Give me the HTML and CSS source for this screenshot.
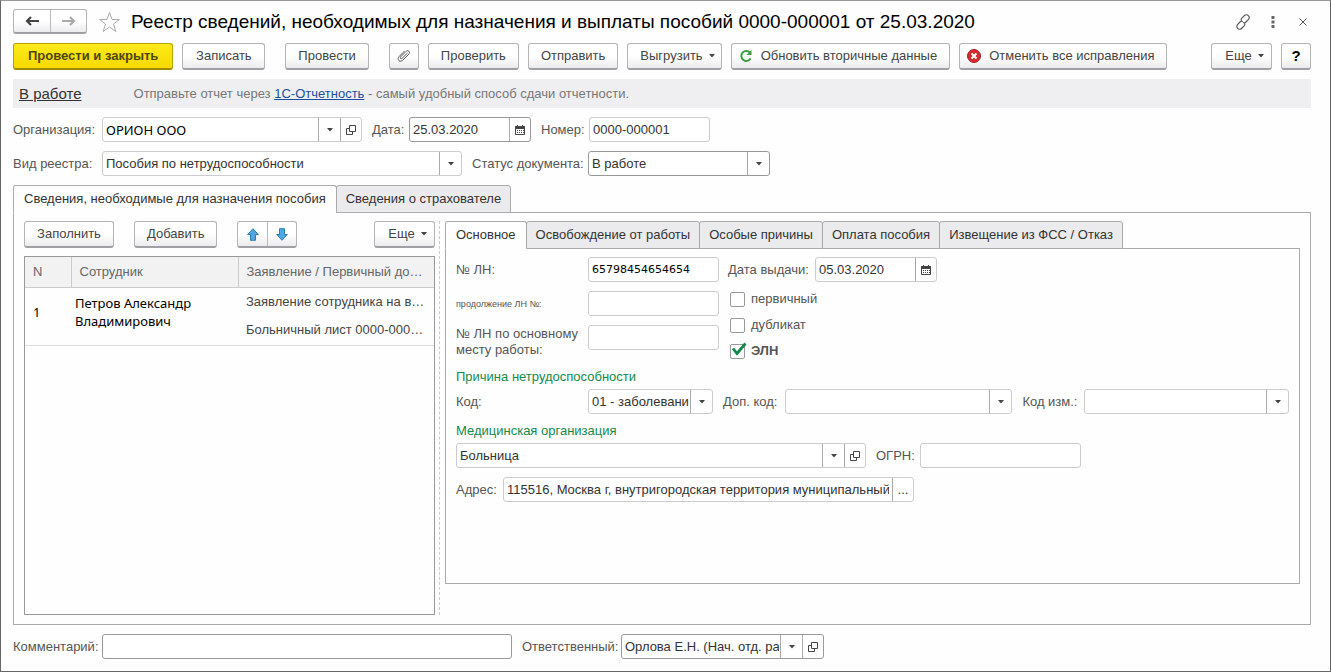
FILE: index.html
```html
<!DOCTYPE html>
<html lang="ru">
<head>
<meta charset="utf-8">
<title>Реестр сведений, необходимых для назначения и выплаты пособий</title>
<link rel="stylesheet" href="styles.css">
</head>
<body>
<svg class="defs" aria-hidden="true">
  <symbol id="caret" viewBox="0 0 6 4"><path d="M0 0h6L3 3.5z" fill="currentColor"/></symbol>
  <symbol id="open" viewBox="0 0 10 10"><path d="M3.5.5h6v6h-6zM3.5 3.5h-3v6h6v-3" fill="none" stroke="currentColor"/></symbol>
  <symbol id="calendar" viewBox="0 0 10 10"><path d="M.5 2.500h9v7h-9z" fill="#fff" stroke="currentColor"/><path d="M0 1h10v3H0zM2 0h1v1H2zM7 0h1v1H7z" fill="currentColor"/><path d="M2 5.500h1m1 0h1m1 0h1m1 0h1M2 7.500h1m1 0h1m1 0h1m1 0h1" stroke="currentColor" fill="none"/></symbol>
</svg>
<main class="window">
  <header class="titlebar">
    <div class="pair nav">
      <button type="button" aria-label="Назад"><svg width="14" height="10" viewBox="0 0 14 10"><path d="M14 5H3M6 1L2 5l4 4" fill="none" stroke="#444" stroke-width="2.200"/></svg></button>
      <button type="button" aria-label="Вперед"><svg width="14" height="10" viewBox="0 0 14 10"><path d="M0 5h11M8 1l4 4-4 4" fill="none" stroke="#aaa" stroke-width="2.200"/></svg></button>
    </div>
    <button type="button" class="plain star" aria-label="Избранное"><svg width="23" height="22" viewBox="0 0 23 22"><path d="M11.500 1.500l2.500 7h7.500l-6 4.500 2.300 7.500-6.300-4.500-6.300 4.500L7.500 13l-6-4.500H9z" fill="#fff" stroke="#aaa"/></svg></button>
    <h1>Реестр сведений, необходимых для назначения и выплаты пособий 0000-000001 от 25.03.2020</h1>
    <div class="tools">
      <button type="button" class="plain" aria-label="Ссылка"><svg width="16" height="16" viewBox="0 0 16 16"><g fill="none" stroke="#555" stroke-width="1.100" stroke-linecap="round"><path d="M6.500 6.500C5.800 5.700 6 5 6.600 4.300L9.500 1.500c1-1 2.600-1 3.800.2s1.200 2.700.2 3.700L11 8c-.7.700-1.600.9-2.500.6"/><path d="M9.500 9.500c.7.800.5 1.500-.1 2.200L6.500 14.500c-1 1-2.600 1-3.800-.2s-1.200-2.700-.2-3.700L5 8c.7-.7 1.600-.9 2.500-.6"/></g></svg></button>
      <button type="button" class="plain" aria-label="Меню"><svg width="4" height="12" viewBox="0 0 4 12"><path d="M.5 0h3v3h-3zM.5 4.500h3v3h-3zM.5 9h3v3h-3z" fill="#666"/></svg></button>
      <button type="button" class="plain close" aria-label="Закрыть"><svg width="8" height="8" viewBox="0 0 8 8"><path d="M.5.500l7 7M7.500.500l-7 7" stroke="#555"/></svg></button>
    </div>
  </header>

  <div class="commands">
    <button type="button" class="btn primary">Провести и закрыть</button>
    <button type="button" class="btn">Записать</button>
    <button type="button" class="btn apart">Провести</button>
    <button type="button" class="btn square apart" aria-label="Файлы"><svg width="14" height="14" viewBox="0 0 14 14"><path d="M10.500 4L5.200 9.300c-.5.500-1.200.5-1.600.1s-.4-1.100.1-1.600L8.900 2.500c.9-.9 2.200-1 3-.2s.7 2.100-.2 3L5.800 11.200c-1.200 1.200-3 1.300-4 .3s-.9-2.800.3-4L7.500 2" fill="none" stroke="#555"/></svg></button>
    <button type="button" class="btn">Проверить</button>
    <button type="button" class="btn">Отправить</button>
    <button type="button" class="btn more">Выгрузить<svg class="caret"><use href="#caret"/></svg></button>
    <button type="button" class="btn iconic"><svg width="14" height="14" viewBox="0 0 14 14"><path d="M11 3.600A5 5 0 1 0 11.600 9.500" fill="none" stroke="#3a9f3f" stroke-width="2"/><path d="M12.500 1v5h-5z" fill="#3a9f3f"/></svg>Обновить вторичные данные</button>
    <button type="button" class="btn iconic"><svg width="14" height="14" viewBox="0 0 14 14"><circle cx="7" cy="7" r="6.500" fill="#d32a2f" stroke="#b01d24"/><path d="M4.500 4.500l5 5m0-5l-5 5" stroke="#fff" stroke-width="2"/></svg>Отменить все исправления</button>
    <button type="button" class="btn more last">Еще<svg class="caret"><use href="#caret"/></svg></button>
    <button type="button" class="btn square help">?</button>
  </div>

  <div class="notice">
    <a class="state" href="#state">В работе</a>
    <p>Отправьте отчет через <a href="#report">1С-Отчетность</a> - самый удобный способ сдачи отчетности.</p>
  </div>

  <div class="row">
    <label class="lead" for="org">Организация:</label>
    <div class="field w260"><span class="pick"><select id="org" class="humanist"><option>ОРИОН ООО</option></select><svg class="caret"><use href="#caret"/></svg></span><button type="button" aria-label="Открыть организацию"><svg class="ico"><use href="#open"/></svg></button></div>
    <label class="next" for="date">Дата:</label>
    <div class="field dark w122"><input id="date" value="25.03.2020"><button type="button" aria-label="Календарь"><svg class="ico"><use href="#calendar"/></svg></button></div>
    <label class="next wide" for="num">Номер:</label>
    <div class="field w121"><input id="num" value="0000-000001"></div>
  </div>
  <div class="row">
    <label class="lead" for="kind">Вид реестра:</label>
    <div class="field w360"><span class="pick"><select id="kind"><option>Пособия по нетрудоспособности</option></select><svg class="caret"><use href="#caret"/></svg></span></div>
    <label class="next status" for="status">Статус документа:</label>
    <div class="field dark w182"><span class="pick"><select id="status"><option>В работе</option></select><svg class="caret"><use href="#caret"/></svg></span></div>
  </div>

  <div class="tabs" role="tablist">
    <button type="button" role="tab" aria-selected="true">Сведения, необходимые для назначения пособия</button>
    <button type="button" role="tab" aria-selected="false">Сведения о страхователе</button>
  </div>
  <section class="panel outer">
    <div class="list">
      <div class="commands">
        <button type="button" class="btn">Заполнить</button>
        <button type="button" class="btn apart">Добавить</button>
        <div class="pair apart">
          <button type="button" aria-label="Вверх"><svg width="12" height="13" viewBox="0 0 12 13"><path d="M6 .7l5.300 5.800H8.500v5.800h-5V6.500H.7z" fill="#4fa6e0" stroke="#2b7cb5"/></svg></button>
          <button type="button" aria-label="Вниз"><svg width="12" height="13" viewBox="0 0 12 13"><path d="M6 12.300L.7 6.500h2.800V.7h5v5.800h2.800z" fill="#4fa6e0" stroke="#2b7cb5"/></svg></button>
        </div>
        <button type="button" class="btn more last">Еще<svg class="caret"><use href="#caret"/></svg></button>
      </div>
      <div class="grid">
        <table>
          <colgroup><col class="c-num"><col class="c-name"><col></colgroup>
          <thead><tr><th>N</th><th>Сотрудник</th><th>Заявление / Первичный до…</th></tr></thead>
          <tbody>
            <tr><td rowspan="2" class="humanist">1</td><td rowspan="2" class="humanist name">Петров Александр<br>Владимирович</td><td>Заявление сотрудника на в…</td></tr>
            <tr><td>Больничный лист 0000-000…</td></tr>
          </tbody>
        </table>
      </div>
    </div>
    <div class="splitter"></div>
    <div class="details">
      <div class="tabs inner" role="tablist">
        <button type="button" role="tab" aria-selected="true">Основное</button>
        <button type="button" role="tab" aria-selected="false">Освобождение от работы</button>
        <button type="button" role="tab" aria-selected="false">Особые причины</button>
        <button type="button" role="tab" aria-selected="false">Оплата пособия</button>
        <button type="button" role="tab" aria-selected="false">Извещение из ФСС / Отказ</button>
      </div>
      <section class="panel form">
        <div class="sheet">
          <div class="codes">
            <label for="ln">№ ЛН:</label>
            <div class="field"><input id="ln" class="digits" value="65798454654654"></div>
            <label for="cont" class="small">продолжение ЛН №:</label>
            <div class="field"><input id="cont"></div>
            <label for="main-ln" class="double">№ ЛН по основному<br>месту работы:</label>
            <div class="field"><input id="main-ln"></div>
          </div>
          <div class="flags">
            <div class="issued">
              <label for="issued">Дата выдачи:</label>
              <div class="field w122"><input id="issued" value="05.03.2020"><button type="button" aria-label="Календарь"><svg class="ico"><use href="#calendar"/></svg></button></div>
            </div>
            <label class="check"><input type="checkbox"><span>первичный</span></label>
            <label class="check"><input type="checkbox"><span>дубликат</span></label>
            <label class="check strong"><input type="checkbox" checked><svg class="tick" width="16" height="14" viewBox="0 0 16 14"><path d="M2 6.500l4 5L14.500 1.500" fill="none" stroke="#128a4c" stroke-width="2.800"/></svg><span>ЭЛН</span></label>
          </div>
        </div>
        <h2>Причина нетрудоспособности</h2>
        <div class="row">
          <label class="reason" for="code">Код:</label>
          <div class="field w125"><span class="pick"><select id="code"><option>01 - заболевание</option></select><svg class="caret"><use href="#caret"/></svg></span></div>
          <label class="next extra" for="extra">Доп. код:</label>
          <div class="field grow-l"><span class="pick"><select id="extra"><option></option></select><svg class="caret"><use href="#caret"/></svg></span></div>
          <label class="next extra" for="change">Код изм.:</label>
          <div class="field grow-s"><span class="pick"><select id="change"><option></option></select><svg class="caret"><use href="#caret"/></svg></span></div>
        </div>
        <h2>Медицинская организация</h2>
        <div class="row">
          <div class="field w410"><span class="pick"><select aria-label="Медицинская организация"><option>Больница</option></select><svg class="caret"><use href="#caret"/></svg></span><button type="button" aria-label="Открыть"><svg class="ico"><use href="#open"/></svg></button></div>
          <label class="next ogrn" for="ogrn">ОГРН:</label>
          <div class="field w161"><input id="ogrn"></div>
        </div>
        <div class="row">
          <label class="address" for="addr">Адрес:</label>
          <div class="field w411"><input id="addr" value="115516, Москва г, внутригородская территория муниципальный"><button type="button">...</button></div>
        </div>
      </section>
    </div>
  </section>

  <footer class="row">
    <label class="lead" for="comment">Комментарий:</label>
    <div class="field dark w410"><input id="comment"></div>
    <label class="next resp" for="resp">Ответственный:</label>
    <div class="field dark w203"><span class="pick"><select id="resp"><option>Орлова Е.Н. (Нач. отд. расчетов)</option></select><svg class="caret"><use href="#caret"/></svg></span><button type="button" aria-label="Открыть ответственного"><svg class="ico"><use href="#open"/></svg></button></div>
  </footer>
</main>
</body>
</html>
```
FILE: styles.css
```css
* { box-sizing: border-box; }

body {
  margin: 0;
  color: #555;
  background: #fefefe;
  font: 13px/16px "Liberation Sans", Arial, sans-serif;
}

button, input, select {
  margin: 0;
  color: #333;
  font: inherit;
}

button {
  display: flex;
  align-items: center;
  justify-content: center;
  padding: 0;
  border: 0;
  background: none;
  white-space: nowrap;
}

svg { flex: none; }
label { white-space: nowrap; }
.defs { position: absolute; width: 0; height: 0; }
.caret { width: 6px; height: 4px; color: #444; }
.ico { width: 10px; height: 10px; color: #444; }
.humanist { color: #000; font-family: "Noto Sans", sans-serif; }
.digits { color: #000; font-family: "DejaVu Sans", sans-serif; font-size: 11px; }

.window {
  display: flex;
  flex-direction: column;
  min-height: 100vh;
  padding: 8px 19px 12px 12px;
  border: 1px solid #666;
  border-top-color: #999;
}

/* Title */
.titlebar { display: flex; align-items: center; height: 25px; }

.pair {
  display: flex;
  height: 27px;
  border: 1px solid #b4b4b4;
  border-bottom: 2px solid #a0a0a4;
  border-radius: 3px;
  background: linear-gradient(#fff 50%, #ececee);
}
.pair button { width: 29px; }
.pair button + button { border-left: 1px solid #bbb; }
.nav { height: 25px; }
.nav button { width: 36px; }
.star { margin: 0 10px 0 11px; }

h1 {
  flex: 1;
  margin: 0;
  color: #000;
  font-size: 19px;
  font-weight: normal;
  line-height: 24px;
  white-space: nowrap;
}

.tools { display: flex; align-items: center; gap: 20px; margin-right: 4px; }
.close { margin-left: 4px; }

/* Command bars */
.commands { display: flex; gap: 9px; }
.window > .commands { margin-top: 9px; }

.btn {
  min-width: 83px;
  height: 27px;
  padding: 0 12px;
  border: 1px solid #b4b4b4;
  border-bottom: 2px solid #a0a0a4;
  border-radius: 3px;
  background: linear-gradient(#fff 50%, #ececee);
  color: #444;
}
.apart { margin-left: 11px; }
.primary {
  padding: 0 14px;
  border-color: #b9a300 #b9a300 #a08c00;
  background: linear-gradient(#ffea1a, #f5d800);
  color: #4e4600;
  font-weight: bold;
}
.square { min-width: 30px; padding: 0; }
.more { min-width: 61px; padding: 0 6px 0 12px; gap: 6px; }
.iconic { padding: 0 12px 0 7px; gap: 8px; }
.last { margin-left: auto; }
.help { color: #000; font-weight: bold; font-size: 15px; }

/* Notice */
.notice {
  display: flex;
  align-items: center;
  gap: 52px;
  height: 29px;
  margin: 9px 0;
  padding: 0 6px;
  background: #efeff1;
}
.notice p { margin: 0; color: #777; }
.notice p a { color: #1d4f9c; }
.notice .state { color: #333; font-size: 15px; }

/* Fields */
.row { display: flex; align-items: center; }
.window > .row { margin-bottom: 9px; }
.lead { width: 89px; }
.next { padding-left: 10px; width: 47px; }
.wide { width: 58px; }
.status { width: 126px; }
.resp { width: 109px; }

.field {
  display: flex;
  height: 25px;
  border: 1px solid #ccc;
  border-radius: 3px;
  background: #fff;
}
.dark { border-color: #999; }
.field input, .field select {
  flex: 1;
  width: 100%;
  min-width: 0;
  padding: 0 3px;
  border: 0;
  outline: 0;
  background: none;
  appearance: none;
}
.field button { flex: none; width: 21px; border-left: 1px solid #aaa; }

.pick { position: relative; display: flex; flex: 1; min-width: 0; }
.pick select { padding-right: 23px; overflow: hidden; text-overflow: clip; }
.pick::after {
  position: absolute;
  top: 0;
  right: 0;
  bottom: 0;
  width: 21px;
  border-left: 1px solid #aaa;
  content: "";
  pointer-events: none;
}
.pick .caret { position: absolute; top: 10px; right: 7px; pointer-events: none; }

.w121 { width: 121px; }
.w122 { width: 122px; }
.w125 { width: 125px; }
.w161 { width: 161px; }
.w182 { width: 182px; }
.w203 { width: 203px; }
.w260 { width: 260px; }
.w360 { width: 360px; }
.w410 { width: 410px; }
.w411 { width: 411px; }

/* Tabs and panels */
.tabs { position: relative; z-index: 1; display: flex; }
.tabs button {
  height: 28px;
  margin-left: -1px;
  padding: 0 9px;
  border: 1px solid #aaa;
  border-radius: 3px 3px 0 0;
  background: #ebebed;
}
.tabs button:first-child { margin-left: 0; padding: 0 10px; }
.tabs [aria-selected="true"] { border-bottom-color: #fefefe; background: #fefefe; }

.panel { margin-top: -1px; border: 1px solid #aaa; }

.outer {
  display: flex;
  flex: 1;
  margin-bottom: 9px;
  padding: 8px 10px 9px;
}

.list { display: flex; flex-direction: column; width: 411px; }
.list .btn:first-child { min-width: 90px; }
.grid { flex: 1; margin-top: 8px; border: 1px solid #999; }
table { width: 100%; border-collapse: collapse; table-layout: fixed; }
.c-num { width: 46px; }
.c-name { width: 167px; }
th {
  height: 30px;
  padding: 0 8px;
  border-right: 1px solid #ccc;
  border-bottom: 1px solid #ccc;
  background: #f2f2f3;
  color: #666;
  font-weight: normal;
  text-align: left;
  white-space: nowrap;
}
th:last-child { border-right: 0; }
td { height: 29px; padding: 0 8px; color: #444; white-space: nowrap; }
td[rowspan] { padding-bottom: 8px; border-bottom: 1px solid #ddd; }
tr:last-child td { border-bottom: 1px solid #ddd; }
td.humanist { color: #000; }
td.name { padding: 0 4px 8px; line-height: 18px; }

.splitter { width: 1px; margin: 0 5px 0 4px; border-left: 1px dashed #ccc; }
.details { display: flex; flex: 1; flex-direction: column; min-width: 0; }
.form { flex: 1; margin-bottom: 31px; padding: 8px 10px; }

.sheet { display: flex; gap: 9px; }
.codes {
  display: grid;
  grid-template-columns: 132px 131px;
  grid-auto-rows: 25px;
  align-items: center;
  row-gap: 9px;
}
.small { font-size: 9px; }
.double { padding-top: 8px; }
.issued { display: flex; align-items: center; margin-bottom: 4px; }
.issued label { width: 87px; }

.check { position: relative; display: flex; align-items: center; gap: 6px; height: 26px; margin-left: 2px; }
.check input {
  width: 15px;
  height: 15px;
  margin: 0;
  border: 1px solid #999;
  border-radius: 2px;
  background: #fff;
  appearance: none;
}
.tick { position: absolute; top: 4px; left: 1px; }
.strong { font-weight: bold; }

h2 {
  margin: 0;
  color: #128a4c;
  font-size: 13px;
  font-weight: normal;
  line-height: 16px;
}
.form h2 + .row { margin-top: 4px; }
.form .row + h2, .form .row + .row { margin-top: 9px; }
.sheet + h2 { margin-top: 5px; }
.reason { width: 132px; }
.extra { width: 72px; }
.grow-l { flex: 228; }
.grow-s { flex: 205; }
.ogrn { width: 54px; }
.address { width: 47px; }

.window > footer.row { margin-bottom: 0; }
```
